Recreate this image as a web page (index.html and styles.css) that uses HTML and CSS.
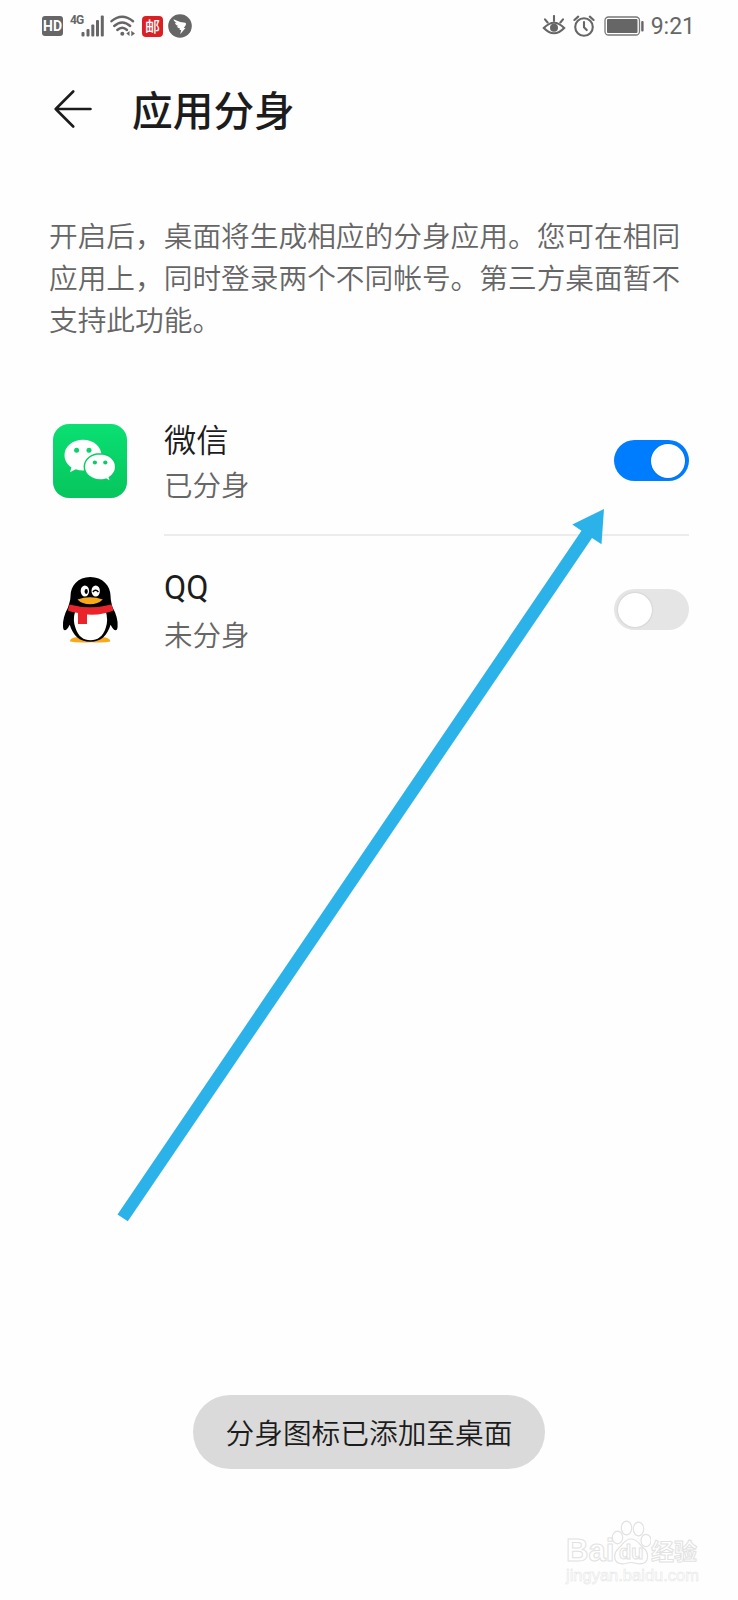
FILE: index.html
```html
<!DOCTYPE html>
<html lang="zh-CN">
<head>
  <meta charset="UTF-8" />
  <title>应用分身</title>
  <meta name="viewport" content="width=device-width, initial-scale=1.0" />
  <link rel="stylesheet" href="styles.css">
</head>
<body>

<div class="screen">
  <!-- status bar -->
  <div class="status">
    <div class="status-left">
      <span class="hd">HD</span>
      <span class="net">4G</span>
      <svg class="signal" width="24" height="22" viewBox="0 0 24 22" fill="#666">
        <rect x="0.5" y="17" width="3" height="4.5" rx="1"/>
        <rect x="5.5" y="14" width="3" height="7.5" rx="1"/>
        <rect x="10.3" y="9.5" width="3" height="12" rx="1"/>
        <rect x="15" y="5" width="3" height="16.5" rx="1"/>
        <rect x="19.8" y="0.5" width="3" height="21" rx="1"/>
      </svg>
      <svg class="wifi" width="26" height="22" viewBox="0 0 26 22">
        <g fill="none" stroke="#666" stroke-width="2.4" stroke-linecap="round">
          <path d="M1.5 6.2Q12 -2.6 23 6.2"/>
          <path d="M4.2 11Q12.2 3.8 20.2 11"/>
          <path d="M7.3 15Q12.2 10.6 17 15"/>
        </g>
        <circle cx="12.3" cy="18.8" r="2" fill="#666"/>
        <path d="M19.5 16v5l-3.2-2.5zM21.3 15.8v5.4l3.7-2.7z" fill="#666"/>
      </svg>
      <span class="mail">邮</span>
      <svg class="bird" width="24" height="24" viewBox="0 0 24 24">
        <circle cx="12" cy="12" r="11.8" fill="#666"/>
        <path d="M5.4 5.3Q11 8.2 17.2 8.8Q18.6 9.2 17.8 10.9L15.8 14.1h1.7L12.2 20.2l1-4.2h-1.7l.5-1.6Q9.5 14.3 8.8 12.2l1.9.1Q7.2 11 7 8.8l1.8.5Q5.6 7.6 5.4 5.3z" fill="#fff"/>
      </svg>
    </div>
    <div class="status-right">
      <svg class="eye" width="24" height="22" viewBox="0 0 24 22">
        <path d="M1.8 13Q12 2.5 22.2 13Q12 23.5 1.8 13z" fill="none" stroke="#666" stroke-width="2.1"/>
        <circle cx="12" cy="12.7" r="4" fill="#666"/>
        <path d="M12 1v5M3 4.300l2.600 3.200M21 4.300l-2.600 3.200" stroke="#666" stroke-width="2.100" stroke-linecap="round"/>
      </svg>
      <svg class="alarm" width="22" height="22" viewBox="0 0 22 22" fill="none" stroke="#666" stroke-width="2.1" stroke-linecap="round">
        <circle cx="11" cy="12" r="8.8"/>
        <path d="M11 7v5.3l2.7 2.8M1.4 5L5.2 1.600M20.600 5L16.800 1.600"/>
      </svg>
      <svg class="battery" width="41" height="20" viewBox="0 0 41 20">
        <rect x="1" y="1" width="34.5" height="18" rx="3.5" fill="#fff" stroke="#777" stroke-width="1.3"/>
        <rect x="3" y="3" width="30.5" height="14" rx="1" fill="#666"/>
        <rect x="37.2" y="5" width="2.4" height="10.5" rx="1" fill="#666"/>
      </svg>
      <span class="time">9:21</span>
    </div>
  </div>

  <div class="header">
    <svg width="38" height="38" viewBox="0 0 38 38" fill="none" stroke="#1c1c1c" stroke-width="2.6" stroke-linecap="round" stroke-linejoin="round">
      <path d="M19.2 1.5L1.7 19l17.5 17.5M2 19h34.5"/>
    </svg>
    <h1>应用分身</h1>
  </div>

  <p class="intro">开启后，桌面将生成相应的分身应用。您可在相同<br>应用上，同时登录两个不同帐号。第三方桌面暂不<br>支持此功能。</p>

  <div class="list">
    <div class="item">
      <svg class="app-icon" width="74" height="74" viewBox="0 0 74 74">
        <defs>
          <linearGradient id="green" x1="0" y1="0" x2="0" y2="1">
            <stop offset="0" stop-color="#0ae073"/>
            <stop offset="1" stop-color="#06c55c"/>
          </linearGradient>
        </defs>
        <rect width="74" height="74" rx="16" fill="url(#green)"/>
        <path d="M30 15.8c-10.4 0-18.5 6.7-18.5 15.5 0 5 2.7 9.3 6.9 12.1l-1.4 4.8 5.8-2.9c2.2.8 4.6 1.2 7.2 1.2 10.4 0 18.5-6.5 18.5-15.2S40.4 15.8 30 15.8z" fill="#fff"/>
        <circle cx="23.6" cy="26.3" r="2.5" fill="#09d36a"/>
        <circle cx="36" cy="26.3" r="2.5" fill="#09d36a"/>
        <path d="M47 29.7c-8.8 0-15.7 5.8-15.7 13.1S38.2 56 47 56c2.1 0 4.1-.3 5.9-.9l4.7 2.5-1.2-4.2c3.800-2.400 6.300-6.200 6.300-10.600 0-7.300-6.900-13.100-15.700-13.100z" fill="#fff" stroke="#08cd65" stroke-width="1.5"/>
        <circle cx="41.9" cy="38.5" r="2.1" fill="#08cd65"/>
        <circle cx="52.3" cy="38.5" r="2.1" fill="#08cd65"/>
      </svg>
      <div class="info">
        <div class="name">微信</div>
        <div class="state">已分身</div>
      </div>
      <div class="switch on"><span class="knob"></span></div>
    </div>

    <div class="item">
      <svg class="app-icon" width="74" height="80" viewBox="0 -6 74 80">
        <path d="M17 65.5Q16.5 61.5 25 61h24Q57 61.5 57.5 65.5Q50 67.3 38 66.2Q25 67.3 17 65.5z" fill="#f7a81c"/>
        <path d="M37.3 1C25 1 17.5 9.5 17.5 20.5c0 4-1.5 7-2.5 11C11.5 38 9.5 44.5 10 50.5c.3 5.5 3.2 5.3 6.7-1.7 3.3 10.5 9.5 17 20.6 17s17-6.5 20.3-17c3.5 7 6.7 7.2 7 1.7.5-6-1.3-12.5-5-19-1-4-2-7-2-11C57.6 9.5 49.5 1 37.3 1z" fill="#000"/>
        <path d="M22 36Q19.5 44 22.5 52c2.8 8.5 8 12.3 15 12.3s12.5-3.8 15.2-12.3Q55.5 44 52.7 35z" fill="#fff"/>
        <path d="M16.5 28.5Q37 34 58.5 28.5L60.5 34.5Q49 39.5 34 38.5v9.5H25V37Q18.5 36 14.8 34.5z" fill="#e9242b"/>
        <ellipse cx="31.9" cy="15" rx="4.2" ry="5.6" fill="#fff"/>
        <ellipse cx="42.7" cy="15" rx="4.2" ry="5.6" fill="#fff"/>
        <ellipse cx="33.2" cy="15.5" rx="1.6" ry="2.4" fill="#000"/>
        <path d="M39.9 16Q42.5 12.5 45.4 16" fill="none" stroke="#000" stroke-width="1.5"/>
        <path d="M24.5 23.5Q37 19 49.8 23.5Q45 28.3 37 28.3T24.5 23.5z" fill="#f7a81c"/>
      </svg>
      <div class="info">
        <div class="name latin">QQ</div>
        <div class="state">未分身</div>
      </div>
      <div class="switch"><span class="knob"></span></div>
    </div>
  </div>

  <div class="toast">分身图标已添加至桌面</div>

  <!-- arrow drawn over the list -->
  <svg class="arrow" width="738" height="1600" viewBox="0 0 738 1600">
    <path d="M604 509L572.3 524.6L581.5 530.8L117.5 1214.5L127.8 1221.3L592 538L601.5 544.3z" fill="#2bb3e9"/>
  </svg>

  <div class="watermark">
    <div class="wm-top">
      <span class="wm-bai">Bai</span>
      <span class="wm-paw">
        <svg width="40" height="46" viewBox="0 0 40 46" fill="#fff" stroke="#e2e2e2" stroke-width="1.2">
          <ellipse cx="6.5" cy="18.5" rx="5.2" ry="6.3"/>
          <ellipse cx="15.5" cy="9" rx="5.2" ry="6.8"/>
          <ellipse cx="27.5" cy="10" rx="5.2" ry="6.8"/>
          <ellipse cx="35" cy="21.5" rx="5" ry="6.2"/>
          <path d="M20 20C13 20 12 26 7.5 29.5S2 41.5 7.5 44s8-.5 12.5-.5 8 3 13 .5 4.500-11 0-14.500S27 20 20 20z"/>
        </svg>
        <span class="wm-du">du</span>
      </span>
      <span class="wm-cn">经验</span>
    </div>
    <div class="wm-url">jingyan.baidu.com</div>
  </div>
</div>

</body>
</html>
```
FILE: styles.css
```css
* { box-sizing: border-box; }
body { margin: 0; background: #fefefe; font-family: "Noto Sans CJK SC", sans-serif; color: #1c1c1c; }
.screen { position: relative; width: 738px; height: 1600px; overflow: hidden; }

.status { display: flex; justify-content: space-between; height: 52px; padding: 0 43px 0 42px; color: #666; font-family: Roboto, sans-serif; }
.status-left, .status-right { display: flex; align-items: center; }
.hd { width: 21px; height: 20px; border-radius: 3px; background: #666; color: #fff; font-size: 14px; font-weight: 700; line-height: 21px; text-align: center; }
.net { margin: 0 0 12px 7px; font-size: 12px; line-height: 12px; font-weight: 700; width: 11px; letter-spacing: -1px; }
.wifi { margin-left: 5px; }
.mail { width: 21px; height: 21px; margin-left: 6px; border-radius: 4px; background: #dc1f25; color: #fff; font: 500 15px/19px "Noto Sans CJK SC", sans-serif; text-align: center; }
.bird { margin-left: 5px; }
.alarm { margin-left: 7px; }
.battery { margin-left: 9px; }
.time { margin-left: 6px; font-size: 23px; line-height: 53px; }

.header { display: flex; align-items: center; gap: 40px; height: 60px; margin-top: 27px; padding-left: 54px; }
h1 { margin: 0; font-size: 40.7px; line-height: 60px; font-weight: 500; }

.intro { margin: 75px 0 0 49px; font-size: 28.7px; line-height: 42px; font-weight: 350; color: #666; white-space: nowrap; }

.list { margin-top: 46px; padding: 0 49px 0 53px; }
.item { display: flex; align-items: center; height: 149px; }
.info { flex: 1; height: 149px; margin-left: 37px; padding-top: 28px; }
.item:first-child .info { height: 150px; margin-bottom: -1px; border-bottom: 2px solid #ececec; }
.item + .item .info { padding-top: 29px; }
.name { font-size: 32.3px; line-height: 48px; font-weight: 350; }
.latin { font-family: Roboto, sans-serif; font-weight: 400; }
.state { font-size: 28.5px; line-height: 44px; font-weight: 350; color: #666; }

.switch { width: 75px; height: 41px; padding: 3.5px 4px; border-radius: 21px; background: #e5e5e5; }
.info + .switch { margin-left: -75px; }
.knob { display: block; width: 34px; height: 34px; border-radius: 50%; background: #fff; box-shadow: 0 0 2px rgba(0, 0, 0, .2); }
.on { background: #007dff; }
.on .knob { margin-left: auto; }

.toast { position: absolute; left: 193px; top: 1395px; width: 352px; height: 74px; border-radius: 37px; background: #dadada; font-size: 28.7px; line-height: 73px; font-weight: 350; text-align: center; }
.arrow { position: absolute; left: 0; top: 0; }

.watermark { position: absolute; left: 566px; top: 1519px; color: #fff; -webkit-text-stroke: 1px #e2e2e2; white-space: nowrap; }
.wm-top { display: flex; align-items: flex-end; height: 46px; }
.wm-bai { width: 45px; margin-bottom: -3px; font: 700 31px/34px "Liberation Sans", sans-serif; }
.wm-paw { position: relative; width: 40px; height: 46px; }
.wm-du { position: absolute; left: 8px; top: 22px; font: 700 20px/22px "Liberation Sans", sans-serif; }
.wm-cn { font-size: 23px; line-height: 30px; font-weight: 700; }
.wm-url { font: 16.5px/20px "Liberation Sans", sans-serif; -webkit-text-stroke: .5px #e4e4e4; }
```
